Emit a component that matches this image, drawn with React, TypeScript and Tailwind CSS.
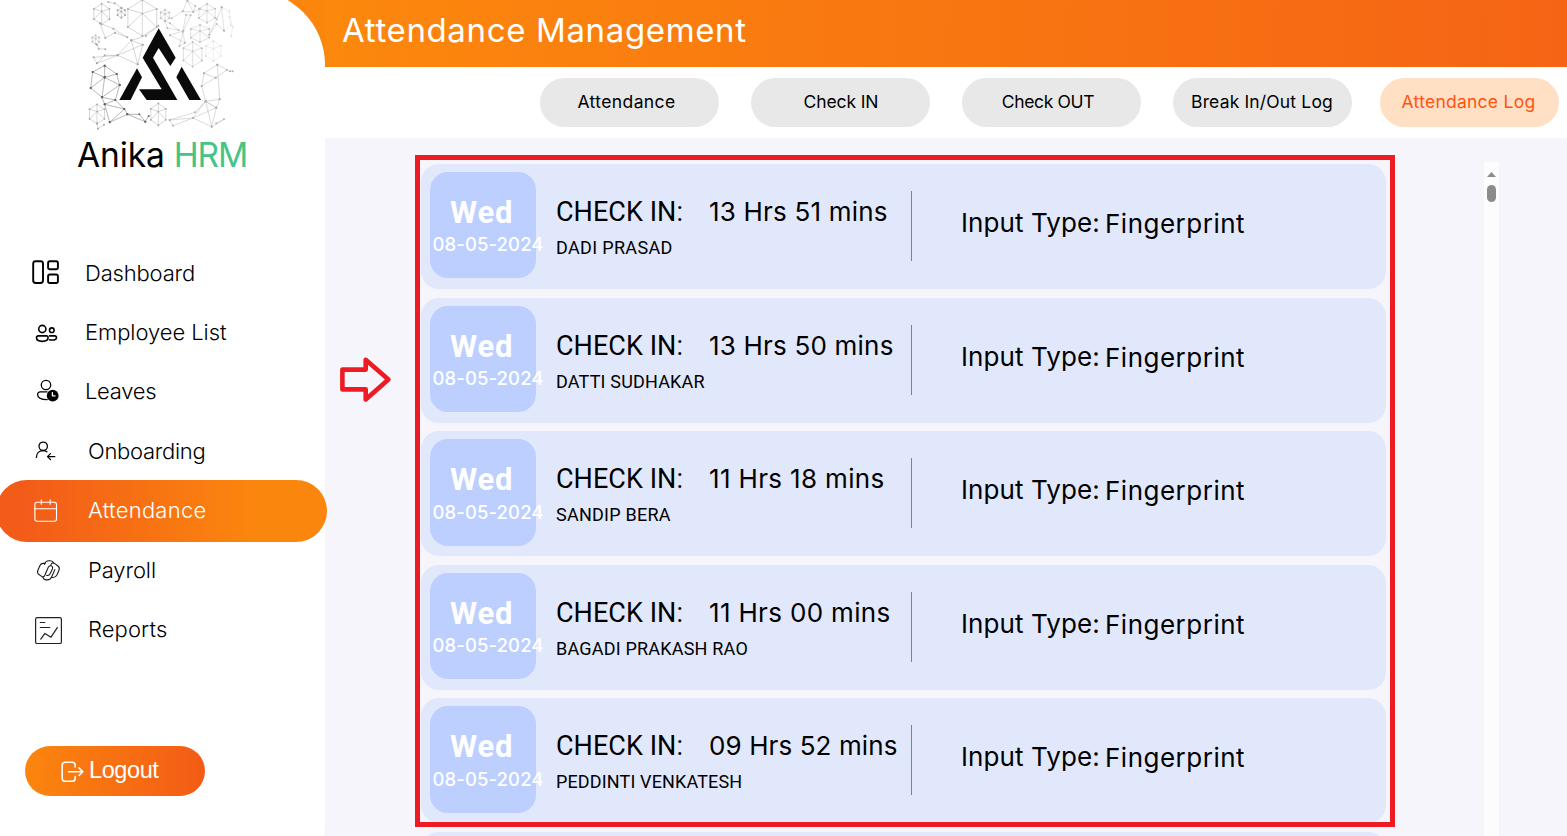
import React from 'react';

/* Node-and-edge clusters of the constellation behind the logo mark. */
type Cluster = { o: number; rings: number[][]; lines: number[][] };

const clusters: Cluster[] = [
  {
    o: 0.36,
    rings: [
      [95, 42, 27, 31],
      [217, 54, 50, 54],
      [154, 38, 13, 15],
      [81, 342, 26, 29],
      [265, 343, 26, 33],
    ],
    lines: [
      [90, 70, 106, 114, 135, 98, 172, 112, 130, 86, 90, 70],
      [81, 190, 104, 166, 143, 166, 71, 172, 81, 190, 143, 166, 184, 121, 218, 134, 203, 193, 143, 166],
      [184, 121, 228, 107, 265, 77],
      [143, 166, 218, 134],
      [184, 121, 203, 193],
      [115, 6, 134, 10, 154, 24],
      [81, 134, 86, 146, 106, 148],
      [81, 370, 84, 386, 102, 374],
    ],
  },
  {
    o: 0.28,
    rings: [
      [411, 40, 28, 28],
      [390, 100, 32, 26],
      [368, 163, 32, 37],
      [285, 46, 15, 17],
      [77, 119, 12, 13],
    ],
    lines: [
      [285, 62, 292, 84, 326, 90, 300, 70, 285, 62],
      [305, 55, 338, 34, 352, 2, 376, 18, 370, 36, 338, 34],
      [352, 2, 370, 36, 390, 26],
      [300, 106, 340, 92, 362, 46, 348, 44, 338, 96, 345, 128, 300, 106],
      [345, 128, 328, 138, 340, 92],
      [418, 104, 440, 58, 455, 22, 462, 92, 440, 72, 418, 104],
    ],
  },
  {
    o: 0.13,
    rings: [[430, 153, 26, 30]],
    lines: [[462, 92, 482, 76, 478, 34, 455, 22], [478, 50, 488, 80, 484, 108]],
  },
  {
    o: 0.65,
    rings: [],
    lines: [
      [104, 197, 140, 222, 149, 255, 96, 292, 62, 264, 68, 216, 104, 197],
      [104, 232, 104, 197],
      [104, 232, 140, 222],
      [104, 232, 149, 255],
      [104, 232, 96, 292],
      [104, 232, 62, 264],
      [104, 232, 68, 216],
      [104, 313, 136, 300, 163, 327, 119, 367, 104, 313, 163, 327, 172, 343, 226, 365, 236, 348],
      [172, 343, 208, 343, 226, 365],
      [172, 343, 119, 367],
      [96, 292, 136, 300, 149, 255],
      [96, 292, 104, 313],
    ],
  },
  {
    o: 0.32,
    rings: [],
    lines: [
      [442, 194, 402, 220, 395, 258, 407, 304, 449, 298, 442, 194],
      [395, 258, 437, 233, 402, 220],
      [442, 194, 480, 214, 488, 214],
      [437, 233, 470, 210],
      [407, 304, 439, 323, 449, 298],
      [407, 304, 369, 354, 309, 377, 299, 360, 375, 337, 407, 304, 439, 323, 425, 380, 369, 354],
      [299, 360, 369, 354, 439, 323],
      [407, 304, 425, 380, 462, 358, 439, 370],
    ],
  },
];

function Wheel({ r }: { r: number[] }) {
  const [cx, cy, rx, ry] = r;
  const pts = Array.from({ length: 6 }, (_, i) => {
    const a = (i / 6) * Math.PI * 2 - Math.PI / 2;
    return [cx + rx * Math.cos(a), cy + ry * Math.sin(a)];
  });
  const hub = [cx, cy - ry * 0.25];
  return (
    <g>
      <polygon points={pts.map((p) => p.join(',')).join(' ')} />
      {pts.map((p, i) => (
        <g key={i}>
          <line x1={hub[0]} y1={hub[1]} x2={p[0]} y2={p[1]} />
          <circle cx={p[0]} cy={p[1]} r="2.8" fill="#111" stroke="none" />
        </g>
      ))}
      <circle cx={hub[0]} cy={hub[1]} r="2.4" fill="#111" stroke="none" />
    </g>
  );
}

function Logo() {
  return (
    <svg width="190" height="133" viewBox="0 0 570 399" fill="none">
      {clusters.map((c, i) => (
        <g key={i} opacity={c.o} stroke="#333" strokeWidth="1.6">
          {c.rings.map((r, j) => (
            <Wheel key={j} r={r} />
          ))}
          {c.lines.map((l, j) => (
            <g key={j}>
              <polyline points={l.join(' ')} />
              {l.map((v, k) =>
                k % 2 === 0 ? <circle key={k} cx={v} cy={l[k + 1]} r="3" fill="#111" stroke="none" /> : null
              )}
            </g>
          ))}
        </g>
      ))}
      <g fill="#0a0a0a">
        <path d="M266 85L317 173 301 198 266 144 249 173 322 300H230L207 268H275L218 173Z" />
        <path d="M201 205L216 232 182 300H148Z" />
        <path d="M335 200L393 300H358L319 232Z" />
      </g>
    </svg>
  );
}

const icons: Record<string, React.ReactNode> = {
  dashboard: (
    <g strokeWidth="1.9">
      <rect x="3.2" y="4.2" width="9.8" height="21.8" rx="2.4" />
      <rect x="18.1" y="4.2" width="9.8" height="8" rx="1.8" />
      <rect x="18.1" y="17.5" width="9.8" height="8.5" rx="1.8" />
    </g>
  ),
  employees: (
    <g strokeWidth="1.6">
      <circle cx="12.3" cy="13" r="3.6" />
      <circle cx="21.8" cy="14.2" r="2.3" />
      <path d="M8.2 19.9H16.4A1.7 1.7 0 0 1 18.1 21.6C18.1 24 15.5 25.4 12.3 25.4S6.5 24 6.5 21.6A1.7 1.7 0 0 1 8.2 19.9Z" />
      <path d="M19.6 19.9H25A1.5 1.5 0 0 1 26.5 21.4C26.5 23.2 24.8 24 22.3 24A8 8 0 0 1 19.6 23.7" />
    </g>
  ),
  leaves: (
    <g strokeWidth="1.3">
      <circle cx="16" cy="9" r="4.7" />
      <path d="M17 15.9H10.2A2.6 2.6 0 0 0 7.6 18.5C7.6 21.8 11 23.6 17.2 23.6" />
      <circle cx="22.7" cy="19.7" r="5.9" fill="currentColor" stroke="none" />
      <path d="M22.4 16.6V19.9H25" stroke="#fff" />
    </g>
  ),
  onboarding: (
    <g strokeWidth="1.3">
      <circle cx="13.2" cy="11.3" r="4.2" />
      <path d="M6.4 22.4C6.5 18.2 9.2 15.6 13 15.6C14.6 15.6 15.9 16 16.9 16.8" />
      <path d="M24.8 21.6H17.6M20.5 18.6L17.5 21.6 20.5 24.6" />
    </g>
  ),
  calendar: (
    <g strokeWidth="1.1">
      <rect x="4.9" y="7.3" width="21.6" height="19" rx="2.2" />
      <path d="M4.9 13.7H26.5M11.3 4.7V9.2M20.2 4.7V9.2" />
    </g>
  ),
  payroll: (
    <g strokeWidth="1.1" stroke="#1a1a1a">
      <path d="M15 9.4H13C11.6 9.4 10.7 10 10.1 11.3L7.9 16.2C7.2 17.9 7.6 19.5 9 20.5L11.6 22.4C12.8 23.2 14.1 22.8 14.7 21.5L18.3 13.2C18.9 11.8 20.8 11.2 21.9 12.2C22.8 13 22.9 13.8 22.4 15L20.2 19.6C19.4 21.2 18 21.9 16.6 21.2" />
      <path d="M14.6 10.4C15.2 8 16.8 6.8 18.8 6.8H20.4C22 6.8 23.1 7.6 23.6 9" />
      <path d="M12.8 22.9C13.3 24.9 14.6 25.9 16.4 25.9H17.6C19.4 25.9 20.6 25.1 21.4 23.5H23C24.9 23.5 26.1 22.6 26.9 21L29 16.2C29.7 14.5 29.2 12.9 27.7 11.8L24.5 9.4C23.2 8.5 21.8 8.9 21.2 10.2L20.8 11.4" />
      <path d="M21.4 23.5L24.8 15.6" />
    </g>
  ),
  reports: (
    <g strokeWidth="1.2" stroke="#222">
      <rect x="5.6" y="3.7" width="25.8" height="25.8" rx="1.6" />
      <path d="M10.3 8.5H14.8M10.3 13.5H19.8M10.8 25.2L14.9 19.4 21 23.2 27.3 13.6" />
    </g>
  ),
};

function Icon({ name }: { name: string }) {
  return (
    <svg
      className="mt-[14px] shrink-0"
      width="32"
      height="32"
      viewBox="0 0 32 32"
      fill="none"
      stroke="currentColor"
      strokeLinecap="round"
      strokeLinejoin="round"
    >
      {icons[name]}
    </svg>
  );
}

const nav = [
  { label: 'Dashboard', icon: 'dashboard', row: 'h-[59px]', text: 'pt-px ml-[23px] tracking-[-0.18px]' },
  { label: 'Employee List', icon: 'employees', row: 'h-[60px]', text: 'pt-px ml-[23px] tracking-[-0.06px]' },
  { label: 'Leaves', icon: 'leaves', row: 'h-[59px]', text: 'ml-[23px] tracking-[-0.3px]' },
  { label: 'Onboarding', icon: 'onboarding', row: 'h-[60px]', text: 'pt-px ml-[26px] tracking-[-0.3px]' },
  { label: 'Attendance', icon: 'calendar', row: '', text: 'ml-[26px] tracking-[0.25px]', active: true },
  { label: 'Payroll', icon: 'payroll', row: 'h-[60px]', text: 'pt-px ml-[26px] tracking-[-0.1px]' },
  { label: 'Reports', icon: 'reports', row: 'h-[59px]', text: 'ml-[26px] tracking-[0.1px]' },
];

function Sidebar() {
  return (
    <div className="z-10 h-[836px] w-[325px] shrink-0 bg-[linear-gradient(#fb860e_67px,#f5f5fb_67px)]">
      <aside className="-mt-[10px] flex h-[910px] w-[325px] flex-col rounded-r-[75px] bg-white pt-[10px]">
        <div className="h-[133px] pl-[70px]">
          <Logo />
        </div>
        <h1 className="h-[110px] pl-[77px] text-[33.5px] leading-[45px] whitespace-nowrap text-black">
          <span className="tracking-[-0.1px]">Anika</span>
          <span className="ml-[9px] tracking-[-1.1px] text-[#45c486]">HRM</span>
        </h1>
        <nav className="flex flex-col text-[22px] leading-[59px] font-light text-black">
          {nav.map((n) =>
            n.active ? (
              <a
                key={n.label}
                className="-mt-px -mb-[2px] -ml-[4px] flex h-[62px] w-[331px] rounded-full bg-[linear-gradient(90deg,#f35b19_8%,#fb860e_78%)] pt-px pl-[34px] text-white"
              >
                <Icon name={n.icon} />
                <span className={n.text}>{n.label}</span>
              </a>
            ) : (
              <a key={n.label} className={`flex pl-[30px] ${n.row}`}>
                <Icon name={n.icon} />
                <span className={n.text}>{n.label}</span>
              </a>
            )
          )}
        </nav>
        <button className="mt-[87px] ml-[25px] flex h-[50px] w-[180px] items-start rounded-full bg-[linear-gradient(90deg,#fb860e,#f35b16)] pt-[14px] pl-[35px] font-['Liberation_Sans',sans-serif] text-[23.5px] leading-[20px] text-white">
          <svg width="26" height="24" viewBox="0 0 26 24" fill="none" stroke="#fff" strokeWidth="1.6" strokeLinecap="round" strokeLinejoin="round">
            <path d="M15.2 7V5A3 3 0 0 0 12.2 2.2H5A3 3 0 0 0 2.2 5V18.4A3 3 0 0 0 5 21.3H12.2A3 3 0 0 0 15.2 18.4V16.6" />
            <path d="M8.6 11.7H22.6M19 7.9L22.8 11.7 19 15.5" />
          </svg>
          <span className="ml-[3px] tracking-[-0.4px]">Logout</span>
        </button>
      </aside>
    </div>
  );
}

const tabs = [
  { label: 'Attendance', cls: 'ml-[215px] bg-[#e8e8e8] pr-[6px] tracking-[0.4px]' },
  { label: 'Check IN', cls: 'ml-[32px] bg-[#e8e8e8] pl-px tracking-[-0.1px]' },
  { label: 'Check OUT', cls: 'ml-[32px] bg-[#e8e8e8] pr-[7px] tracking-[-0.35px]' },
  { label: 'Break In/Out Log', cls: 'ml-[32px] bg-[#e8e8e8] pr-px tracking-[0.16px]' },
  { label: 'Attendance Log', cls: 'ml-[28px] bg-[#ffe0c4] text-[#ff5310] pr-[2px] tracking-[0.25px]' },
];

const logs = [
  { name: 'DADI PRASAD', time: '13 Hrs 51 mins', gap: 'mb-[9px]', tile: 'h-[106px]', date: '-mt-px', t: 'tracking-[0.2px]', n: 'tracking-[0.34px]' },
  { name: 'DATTI SUDHAKAR', time: '13 Hrs 50 mins', gap: 'mb-[8px]', tile: 'h-[106px]', date: '-mt-px', t: 'tracking-[0.2px]', n: 'tracking-[0.18px]' },
  { name: 'SANDIP BERA', time: '11 Hrs 18 mins', gap: 'mb-[9px]', tile: 'h-[107px]', date: '', t: 'tracking-[0.35px]', n: 'tracking-[0.25px]' },
  { name: 'BAGADI PRAKASH RAO', time: '11 Hrs 00 mins', gap: 'mb-[8px]', tile: 'h-[106px]', date: '-mt-px', t: 'tracking-[0.33px]', n: 'tracking-[0.2px]' },
  { name: 'PEDDINTI VENKATESH', time: '09 Hrs 52 mins', gap: 'mb-[9px]', tile: 'h-[107px]', date: '', t: 'tracking-[0.1px]', n: 'tracking-[0.14px]' },
];

function LogCard({ log }: { log: (typeof logs)[number] }) {
  return (
    <div className={`flex h-[125px] shrink-0 rounded-[18px] bg-[#e2e8fc] pl-[9px] whitespace-nowrap text-black ${log.gap}`}>
      <div className={`mt-[8px] w-[106px] shrink-0 rounded-[18px] bg-[#bccfff] pt-[21px] text-white ${log.tile}`}>
        <div className="pl-[20px] font-[Roboto,sans-serif] text-[31px] leading-[40px] font-bold tracking-[0.8px]">Wed</div>
        <div className={`pl-[2.5px] text-[18.5px] leading-[24px] font-medium tracking-[0.1px] ${log.date}`}>08-05-2024</div>
      </div>
      <div className="ml-[20px] w-[355px] shrink-0 pt-[32px]">
        <div className="flex leading-[32px]">
          <span className="w-[153px] font-[Roboto,sans-serif] text-[27px] tracking-[0.05px]">CHECK IN:</span>
          <span className={`text-[26px] ${log.t}`}>{log.time}</span>
        </div>
        <div className={`mt-[8px] font-[Roboto,sans-serif] text-[18px] leading-[24px] ${log.n}`}>{log.name}</div>
      </div>
      <div className="mt-[27px] h-[70px] w-px shrink-0 bg-[#80838c]" />
      <div className="flex pt-[43px] pl-[49px] text-[26px] leading-[32px]">
        <span className="w-[144px] tracking-[0.1px]">Input Type:</span>
        <span className="pt-px tracking-[0.5px]">Fingerprint</span>
      </div>
    </div>
  );
}

export default function App() {
  return (
    <div className="flex h-[836px] w-[1567px] overflow-hidden bg-[#f5f5fb] font-[Inter,sans-serif]">
      <Sidebar />
      <div className="flex w-[1242px] flex-col">
        <header className="h-[67px] shrink-0 bg-[linear-gradient(92deg,#fc880d,#f56415)] pl-[17px] text-[33px] leading-[60px] tracking-[0.64px] text-white">
          Attendance Management
        </header>
        <div className="flex h-[71px] shrink-0 bg-white pt-[11px]">
          {tabs.map((t) => (
            <button
              key={t.label}
              className={`flex h-[49px] w-[179px] shrink-0 justify-center rounded-[24.5px] text-[17.5px] leading-[48px] whitespace-nowrap ${t.cls}`}
            >
              {t.label}
            </button>
          ))}
        </div>
        <main className="relative flex h-[698px] overflow-hidden">
          <div className="ml-[96px] flex w-[965px] flex-col pt-[26px]">
            {logs.map((l) => (
              <LogCard key={l.name} log={l} />
            ))}
            <div className="h-[125px] shrink-0 rounded-[18px] bg-[#e2e8fc]" />
          </div>
          <div className="mt-[24px] ml-[98px] flex w-[15px] flex-col items-center bg-[#fcfcfc] pt-[10px]">
            <svg width="9" height="5" viewBox="0 0 9 5">
              <path d="M4.5 0L9 5H0Z" fill="#8b8b8b" />
            </svg>
            <div className="mt-[8px] h-[17px] w-[9px] rounded-full bg-[#8b8b8b]" />
          </div>
          <div className="absolute top-[17px] left-[90px] h-[672px] w-[980px] border-[5px] border-[#ed1c24]" />
          <svg className="absolute top-[219px] left-[15px]" width="52" height="46" viewBox="0 0 52 46" fill="none" stroke="#ed1c24" strokeWidth="4.6" strokeLinejoin="round">
            <path d="M2.4 12.6H25.7V2.8L48.4 22.4 25.7 42.4V32.4H2.4Z" />
          </svg>
        </main>
      </div>
    </div>
  );
}
